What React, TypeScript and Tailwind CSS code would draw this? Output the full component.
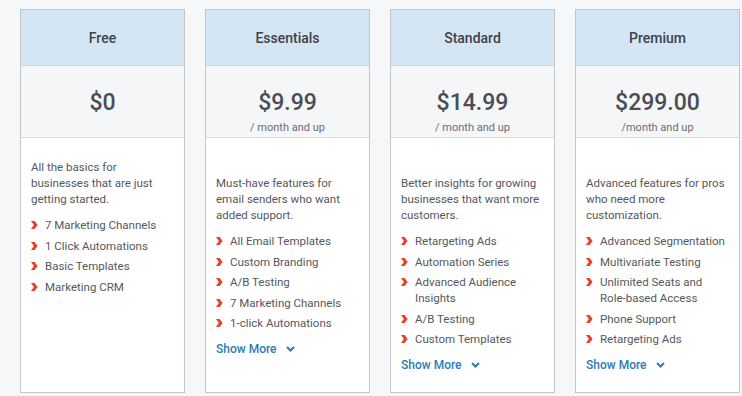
import React from "react";

type Plan = {
  name: string;
  price: string;
  sub?: string;
  desc: string;
  items: string[];
  more?: boolean;
};

const plans: Plan[] = [
  {
    name: "Free",
    price: "$0",
    desc: "All the basics for businesses that are just getting started.",
    items: ["7 Marketing Channels", "1 Click Automations", "Basic Templates", "Marketing CRM"],
  },
  {
    name: "Essentials",
    price: "$9.99",
    sub: "/ month and up",
    desc: "Must-have features for email senders who want added support.",
    items: ["All Email Templates", "Custom Branding", "A/B Testing", "7 Marketing Channels", "1-click Automations"],
    more: true,
  },
  {
    name: "Standard",
    price: "$14.99",
    sub: "/ month and up",
    desc: "Better insights for growing businesses that want more customers.",
    items: ["Retargeting Ads", "Automation Series", "Advanced Audience Insights", "A/B Testing", "Custom Templates"],
    more: true,
  },
  {
    name: "Premium",
    price: "$299.00",
    sub: "/month and up",
    desc: "Advanced features for pros who need more customization.",
    items: [
      "Advanced Segmentation",
      "Multivariate Testing",
      "Unlimited Seats and Role-based Access",
      "Phone Support",
      "Retargeting Ads",
    ],
    more: true,
  },
];

function Bullet() {
  return (
    <svg width="7" height="8" viewBox="0 0 7 8" className="shrink-0 mt-[4px]">
      <polygon points="0,0 3.6,0 6.6,4 3.6,8 0,8 2.8,4" fill="#e8412c" />
    </svg>
  );
}

function Card({ p }: { p: Plan }) {
  return (
    <div className="w-[165px] h-[384px] border border-[#c4c6c9] bg-white flex flex-col">
      <div className="h-[56px] bg-[#d4e6f4] border-b border-[#d2d4d7] flex items-center justify-center pt-[2px]">
        <span className="text-[14px] font-medium text-[#3f414b]">{p.name}</span>
      </div>
      <div className="h-[72px] bg-[#f5f6f8] border-b border-[#d9dbde] flex flex-col items-center pt-[23px]">
        <span className="text-[23px] leading-[28px] font-medium text-[#4a4c56]">{p.price}</span>
        {p.sub && <span className="text-[11px] leading-[16px] mt-[3px] text-[#6a6c72]">{p.sub}</span>}
      </div>
      <div
        className={
          p.sub
            ? "px-[10px] pt-[37px] text-[11.5px] leading-[16px] text-[#55585e]"
            : "px-[10px] pt-[21px] text-[11.5px] leading-[16px] text-[#55585e]"
        }
      >
        <p className="pr-[4px]">{p.desc}</p>
        <ul className="mt-[10px] flex flex-col gap-[4.5px]">
          {p.items.map((it) => (
            <li key={it} className="flex gap-[7px]">
              <Bullet />
              <span>{it}</span>
            </li>
          ))}
        </ul>
        {p.more && (
          <div className="mt-[10px] flex items-center gap-[9px] text-[12px] leading-[16px] font-medium text-[#2e7bb5]">
            <span>Show More</span>
            <svg width="9" height="6" viewBox="0 0 9 6">
              <polyline points="1,1 4.5,4.5 8,1" fill="none" stroke="#2e7bb5" strokeWidth="2" />
            </svg>
          </div>
        )}
      </div>
    </div>
  );
}

export default function App() {
  return (
    <div
      className="w-[742px] h-[396px] bg-[#f6f7f8] pt-[9px] pl-[20px] flex gap-[20px] overflow-hidden"
      style={{ fontFamily: "Roboto, 'Liberation Sans', sans-serif" }}
    >
      {plans.map((p) => (
        <Card key={p.name} p={p} />
      ))}
    </div>
  );
}
